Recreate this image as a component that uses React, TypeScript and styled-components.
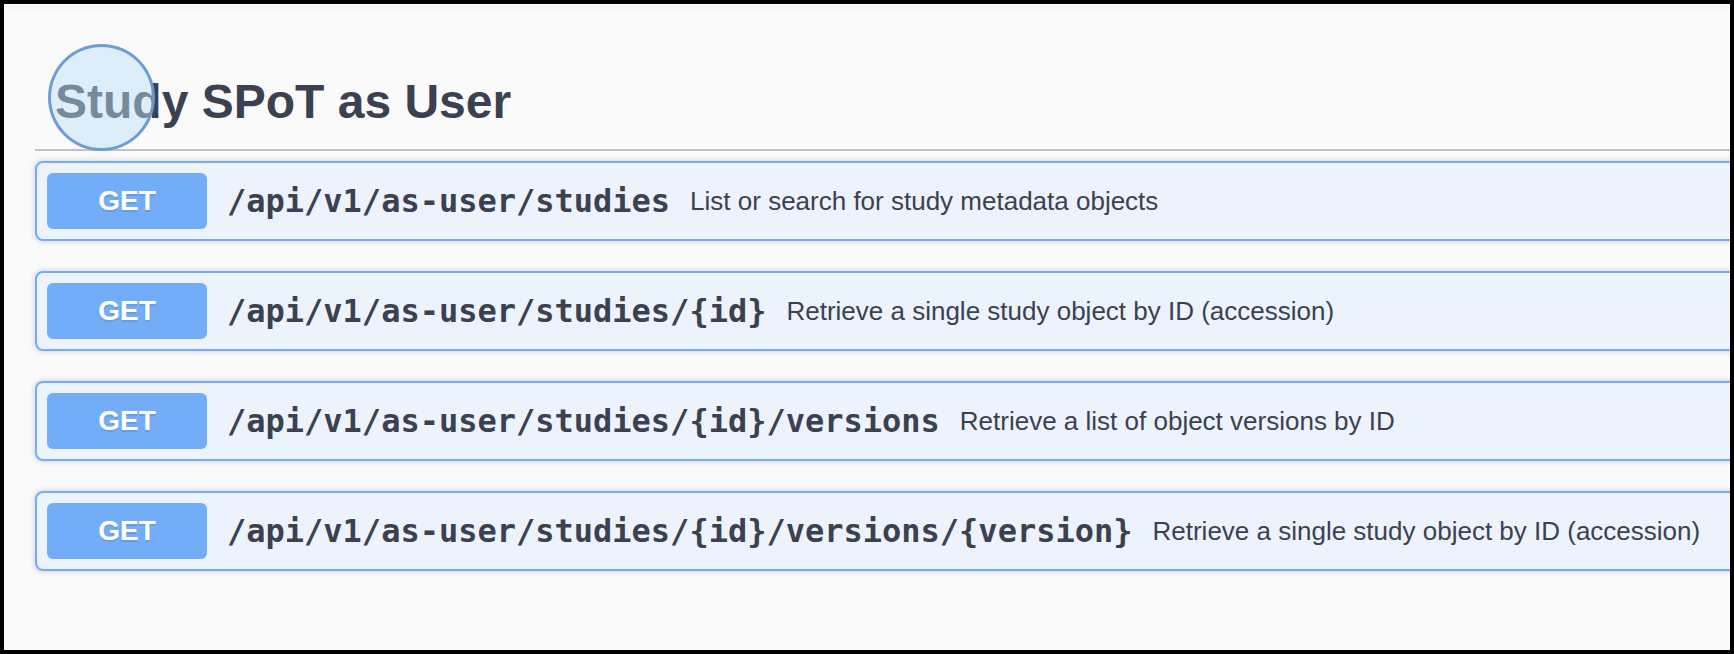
import React from "react";
import styled, { createGlobalStyle } from "styled-components";

const GlobalStyle = createGlobalStyle`
  html, body {
    margin: 0;
    padding: 0;
    background: #000;
  }
  * { box-sizing: border-box; }
`;

const Frame = styled.div`
  position: relative;
  width: 1734px;
  height: 654px;
  border: 4px solid #000;
  background: #fafafa;
  overflow: hidden;
`;

const TopEdge = styled.div`
  height: 1px;
  background: #ffffff;
  box-shadow: 0 1px 6px rgba(0, 0, 0, 0.14);
`;

const Page = styled.div`
  padding: 49px 0 0 31px;
  margin-right: -60px;
`;

const TagHeading = styled.h3`
  margin: 0 0 10px;
  padding: 20px 40px 20px 20px;
  border-bottom: 2px solid rgba(59, 65, 81, 0.3);
  font-family: "Liberation Sans", Arial, sans-serif;
  font-size: 48px;
  font-weight: 700;
  line-height: 55px;
  color: #3b4151;
`;

const OpList = styled.div`
  display: flex;
  flex-direction: column;
  gap: 30px;
`;

const OpBlock = styled.div`
  display: flex;
  align-items: center;
  padding: 10px;
  border: 2px solid #74adf7;
  border-radius: 8px;
  background: #ecf3fc;
  box-shadow: 0 0 6px rgba(0, 0, 0, 0.19);
`;

const Method = styled.span`
  min-width: 160px;
  padding: 12px 0;
  border-radius: 6px;
  background: #73adf8;
  color: #ffffff;
  font-family: "Liberation Sans", Arial, sans-serif;
  font-size: 28px;
  font-weight: 700;
  line-height: 32px;
  text-align: center;
  text-shadow: 0 2px 0 rgba(0, 0, 0, 0.1);
`;

const Path = styled.span`
  padding: 0 20px;
  font-family: "DejaVu Sans Mono", monospace;
  font-size: 32px;
  font-weight: 700;
  color: #3b4151;
  white-space: nowrap;
`;

const Description = styled.span`
  font-family: "Liberation Sans", Arial, sans-serif;
  font-size: 26px;
  color: #3b4151;
  white-space: nowrap;
`;

const ClickMarker = styled.div`
  position: absolute;
  left: 44px;
  top: 40px;
  width: 107px;
  height: 107px;
  border-radius: 50%;
  border: 3px solid rgba(104, 152, 210, 0.95);
  background: rgba(187, 224, 250, 0.46);
  pointer-events: none;
`;

const ops = [
  { path: "/api/v1/as-user/studies", desc: "List or search for study metadata objects" },
  { path: "/api/v1/as-user/studies/{id}", desc: "Retrieve a single study object by ID (accession)" },
  { path: "/api/v1/as-user/studies/{id}/versions", desc: "Retrieve a list of object versions by ID" },
  {
    path: "/api/v1/as-user/studies/{id}/versions/{version}",
    desc: "Retrieve a single study object by ID (accession)",
  },
];

export default function App() {
  return (
    <>
      <GlobalStyle />
      <Frame>
        <TopEdge />
        <Page>
          <TagHeading>Study SPoT as User</TagHeading>
          <OpList>
            {ops.map((op) => (
              <OpBlock key={op.path}>
                <Method>GET</Method>
                <Path>{op.path}</Path>
                <Description>{op.desc}</Description>
              </OpBlock>
            ))}
          </OpList>
        </Page>
        <ClickMarker />
      </Frame>
    </>
  );
}
